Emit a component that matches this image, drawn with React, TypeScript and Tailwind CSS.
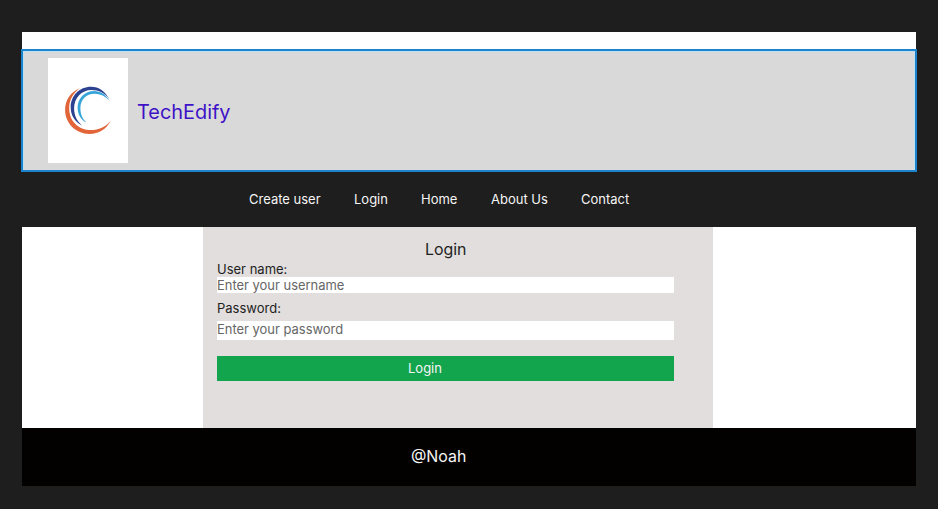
const links = [
  { label: "Create user", width: "w-[105px]" },
  { label: "Login", width: "w-[67px]" },
  { label: "Home", width: "w-[70px]" },
  { label: "About Us", width: "w-[90px]" },
  { label: "Contact", width: "w-[60px]" },
];

function Logo() {
  return (
    <svg viewBox="0 0 80 105" className="h-[105px] w-20 bg-white" role="img" aria-label="TechEdify logo">
      <path fill="#e2653a" d="M32 30.3C22.7 34 17.1 42 17.1 51.8C17.1 65.2 27.8 76 41.5 76C50.8 76 58.3 71 62.7 63C57.5 69 50.7 72.1 43 72.1C30.7 72.1 21.2 63.2 21.2 50.5C21.2 42 25 35 32 30.3Z" />
      <path fill="#2b4290" d="M61.2 41C57 33.2 51 28.8 43 28.8C31.5 28.8 22.7 37.7 22.7 49.3C22.7 57.5 26.8 64 34 67.4C28.5 62.5 26.1 57 26.1 50.2C26.1 40.2 33.5 32.1 43.6 32.1C50.8 32.1 56.7 35.2 61.2 41Z" />
      <path fill="#38a5d8" d="M61.7 43C57.8 36.5 52.7 33 46 33C36.9 33 29.6 40.4 29.6 49.6C29.6 56.3 32.7 61.8 38.5 64.7C34.2 60.4 32.4 55.8 32.4 50.2C32.4 41.7 38.3 35.8 46.6 35.8C52.3 35.8 57.3 38.2 61.7 43Z" />
    </svg>
  );
}

export default function App() {
  return (
    <div className="h-[509px] w-full overflow-hidden bg-[#1e1e1e] px-[21px] pt-8 font-['Inter',sans-serif] text-[13px] leading-4 text-[#1e1e1e]">
      <div className="mx-px h-[17px] bg-white" />
      <header className="flex h-[123px] items-center border-2 border-[#1c84cd] bg-[#d9d9d9] pl-[25px] shadow-[inset_1px_1px_0_#bfe0f2,inset_-1px_0_0_#bfe0f2]">
        <Logo />
        <h1 className="ml-[9px] pt-0.5 text-[19.9px] leading-6 text-[#3e12c7]">TechEdify</h1>
      </header>
      <nav className="flex h-[55px] items-center pb-0.5 pl-[228px] text-[#f5f5f5]">
        {links.map((link) => (
          <a key={link.label} href="#" className={`${link.width} whitespace-nowrap`}>
            {link.label}
          </a>
        ))}
      </nav>
      <main className="mx-px flex h-[201px] bg-white pl-[181px]">
        <form className="flex w-[510px] flex-col bg-[#e1dedd] pl-[14px] pr-[39px] pt-[13px]">
          <h2 className="pl-[208px] text-[15.9px] leading-5">Login</h2>
          <label htmlFor="username" className="mt-px h-4">User name:</label>
          <input id="username" placeholder="Enter your username" className="h-4 bg-white text-[12.95px] outline-none placeholder:text-[#666666]" />
          <label htmlFor="password" className="mt-[7px] h-[21px]">Password:</label>
          <input id="password" type="password" placeholder="Enter your password" className="h-[19px] bg-white pb-[3px] text-[12.95px] outline-none placeholder:text-[#666666]" />
          <button type="button" className="mt-4 h-[25px] bg-[#13a44e] pb-0.5 pl-[191px] text-left text-[#f5f5f5]">Login</button>
        </form>
      </main>
      <footer className="mx-px h-[58px] bg-[#030000] pl-[389px] pt-[19px] text-[15.9px] leading-5 text-[#f5f5f5]">@Noah</footer>
    </div>
  );
}
